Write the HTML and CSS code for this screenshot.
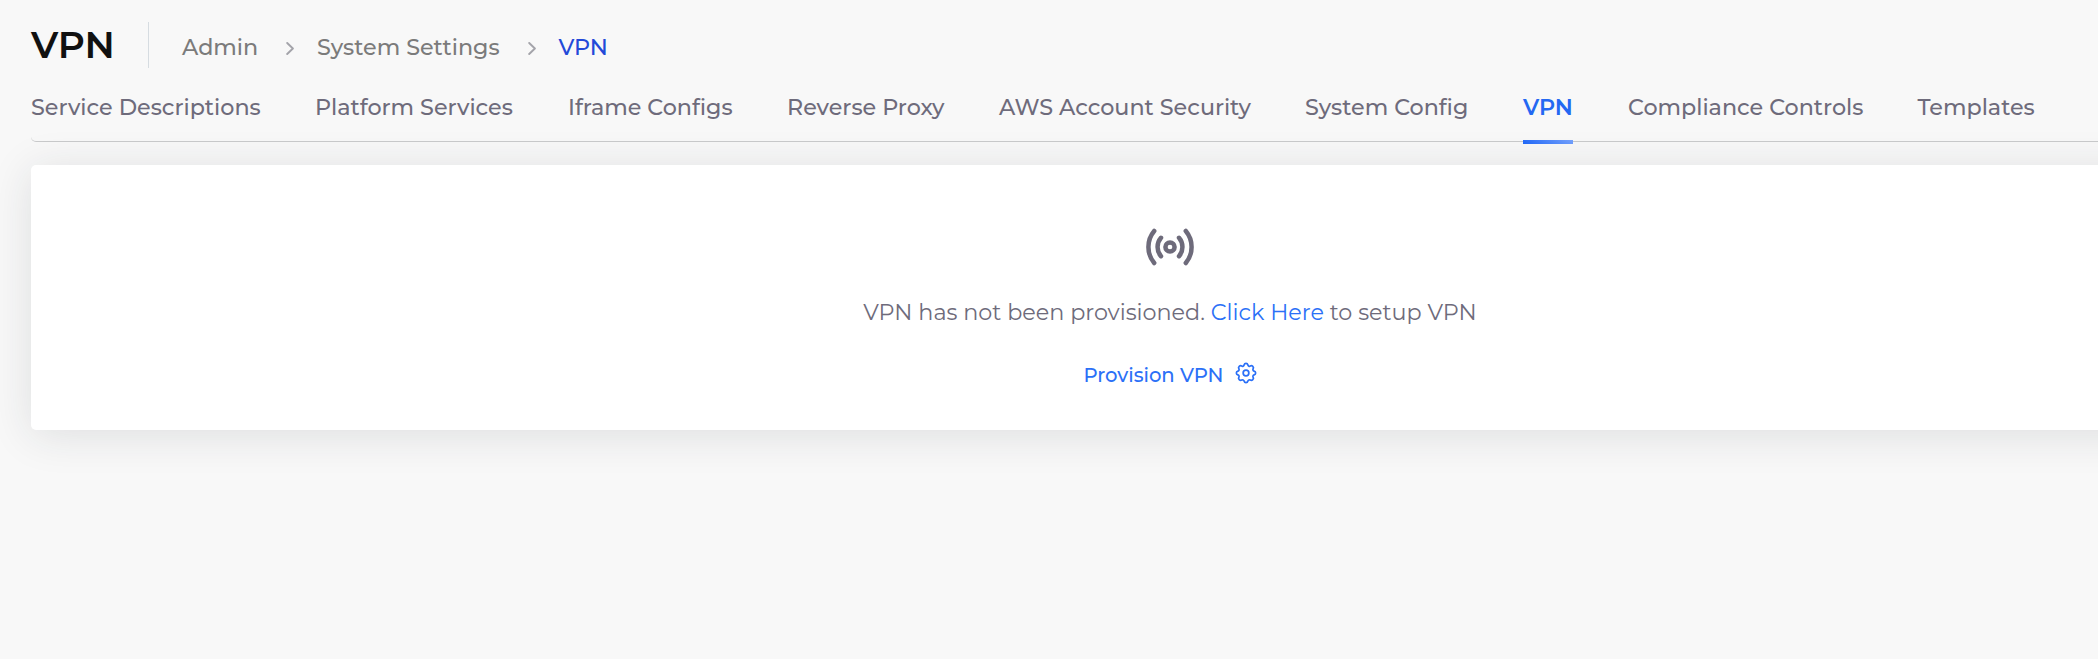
FILE: index.html
```html
<!DOCTYPE html>
<html lang="en">
<head>
<meta charset="utf-8">
<title>VPN</title>
<link rel="stylesheet" href="styles.css">
</head>
<body>
<header class="header">
  <h1 class="title">VPN</h1>
  <nav class="crumbs">
    <a class="crumb crumb-admin">Admin</a>
    <svg class="chevron" viewBox="0 0 8 13"><path d="M1.200 1 6.900 6.500 1.200 12"/></svg>
    <a class="crumb crumb-settings">System Settings</a>
    <svg class="chevron" viewBox="0 0 8 13"><path d="M1.200 1 6.900 6.500 1.200 12"/></svg>
    <a class="crumb crumb-current">VPN</a>
  </nav>
</header>
<nav class="tabs">
  <a class="tab tab-descriptions">Service Descriptions</a>
  <a class="tab tab-platform">Platform Services</a>
  <a class="tab tab-iframe">Iframe Configs</a>
  <a class="tab tab-proxy">Reverse Proxy</a>
  <a class="tab tab-aws">AWS Account Security</a>
  <a class="tab tab-config">System Config</a>
  <a class="tab tab-vpn active">VPN</a>
  <a class="tab tab-compliance">Compliance Controls</a>
  <a class="tab tab-templates">Templates</a>
</nav>
<main class="card">
  <svg class="signal" viewBox="0 0 50 38">
    <circle cx="25" cy="19" r="4.600"/>
    <path d="M16 9.800a14 14 0 0 0 0 18.400M34 9.800a14 14 0 0 1 0 18.400M9.200 3a25 25 0 0 0 0 32M40.800 3a25 25 0 0 1 0 32"/>
  </svg>
  <p class="message">VPN has not been provisioned. <a class="msg-link">Click Here</a> to setup VPN</p>
  <a class="provision"><span>Provision VPN</span>
    <svg class="gear" viewBox="0 0 24 24"><circle cx="12" cy="12" r="3.1"/><path d="M12 1.5c1.3 0 1.8.7 2.1 1.8.3 1.2 1.500 1.700 2.600 1.100 1-.6 1.800-.5 2.700.3.900.9 1 1.700.4 2.700-.6 1.100-.1 2.300 1.100 2.600 1.100.3 1.600.8 1.600 2s-.5 1.700-1.600 2c-1.200.3-1.700 1.500-1.100 2.600.6 1 .5 1.800-.4 2.700-.9.900-1.700 1-2.700.4-1.100-.6-2.300-.1-2.600 1.100-.3 1.100-.8 1.700-2.100 1.700s-1.800-.6-2.100-1.700c-.3-1.200-1.500-1.700-2.600-1.100-1 .6-1.800.5-2.700-.4-.9-.9-1-1.700-.4-2.700.6-1.100.1-2.300-1.100-2.600-1.100-.3-1.600-.8-1.600-2s.5-1.700 1.600-2c1.200-.3 1.700-1.500 1.100-2.600-.6-1-.5-1.800.4-2.700.9-.8 1.700-.9 2.700-.3 1.100.6 2.300.1 2.600-1.100.3-1.100.8-1.800 2.100-1.800Z"/></svg>
  </a>
</main>
</body>
</html>
```
FILE: styles.css
```css
* { box-sizing: border-box; }
body {
  margin: 0;
  height: 659px;
  overflow: hidden;
  background: #f8f8f8;
  color: #6e6b7b;
  font-family: Montserrat, Inter, sans-serif;
  font-size: 22.25px;
}
.header { display: flex; height: 90px; padding: 22px 0 0 31px; }
.title {
  width: 118px;
  height: 46px;
  margin: 0;
  border-right: 1px solid #d6dce1;
  color: #111;
  font-size: 37.4px;
  font-weight: 600;
  line-height: 46px;
  white-space: nowrap;
}
.crumbs { display: flex; align-items: center; height: 28px; margin: 12px 0 0 33px; color: #7b7b7b; font-weight: 500; }
.crumb { height: 30px; line-height: 28px; white-space: nowrap; }
.crumb-admin { width: 104px; }
.crumb-settings { width: 211px; margin-left: 23px; }
.crumb-current { margin-left: 22.500px; color: #2349d8; }
.chevron { flex: none; width: 8px; height: 13px; fill: none; stroke: #a4a4aa; stroke-width: 1.9; stroke-linecap: round; stroke-linejoin: round; }
.tabs {
  display: flex;
  gap: 55px;
  height: 52px;
  margin-left: 31px;
  border-bottom: 1.4px solid #c9cacb;
  border-bottom-left-radius: 5px;
  font-weight: 500;
}
.tab { flex: none; height: 54px; padding-top: 3px; line-height: 28px; white-space: nowrap; }
.tab-descriptions { width: 229px; }
.tab-platform { width: 198px; }
.tab-iframe { width: 164px; }
.tab-proxy { width: 157px; }
.tab-aws { width: 251px; }
.tab-config { width: 163px; }
.tab-vpn { width: 50px; }
.tab-compliance { width: 234.500px; }
.tab-templates { width: 117px; }
.active {
  background: linear-gradient(30deg, #1f66f6, #75a1fb) bottom / 100% 4px no-repeat;
  color: #2468f2;
  font-weight: 600;
}
.card {
  display: flex;
  flex-direction: column;
  align-items: center;
  width: 2278px;
  height: 265px;
  margin: 23px 0 0 31px;
  padding-top: 63px;
  border-radius: 5px;
  background: #fff;
  box-shadow: 0 5px 44px rgba(34, 41, 47, .12);
}
.signal { width: 50px; height: 38px; fill: none; stroke: #6e6b7b; stroke-width: 4.5; stroke-linecap: round; }
.message { margin: 32px 0 0; font-size: 22.3px; line-height: 28px; white-space: nowrap; }
.msg-link { color: #2b70f7; }
.provision { display: flex; align-items: center; gap: 11px; height: 28px; margin-top: 35px; color: #2b70f7; font-size: 19.6px; font-weight: 500; white-space: nowrap; }
.gear { width: 22px; height: 22px; margin-bottom: 4px; fill: none; stroke: #2b70f7; stroke-width: 1.9; }
```
